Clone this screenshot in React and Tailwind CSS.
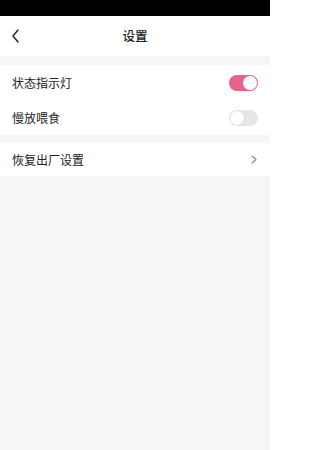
import React from "react";

function Toggle({ on }) {
  return (
    <div
      className={`relative w-[29px] h-[16px] rounded-full ${on ? "bg-[#e8628a]" : "bg-[#e6e6e6]"}`}
    >
      <div
        className={`absolute top-[1px] w-[14px] h-[14px] rounded-full bg-white ${on ? "right-[1px]" : "left-[1px] shadow-[0_0_0_0.5px_#d4d4d4]"}`}
      />
    </div>
  );
}

export default function App() {
  return (
    <div
      className="w-[270px] h-[450px] bg-[#f6f6f6] flex flex-col text-[#222]"
      style={{ fontFamily: '"Noto Sans CJK SC", "Noto Sans", sans-serif' }}
    >
      <div className="h-[16px] bg-black" />
      <div className="h-[40px] bg-white relative flex items-center justify-center">
        <svg
          className="absolute left-[11px] top-[13px]"
          width="9"
          height="14"
          viewBox="0 0 9 14"
          fill="none"
          stroke="#222"
          strokeWidth="1.4"
          strokeLinecap="round"
          strokeLinejoin="round"
        >
          <path d="M7 1 L2 7 L7 13" />
        </svg>
        <span className="text-[12.5px] font-medium text-[#222]">设置</span>
      </div>
      <div className="h-[9px]" />
      <div className="bg-white flex flex-col">
        <div className="h-[35px] flex items-center justify-between pl-[12px] pr-[12px]">
          <span className="text-[12px]">状态指示灯</span>
          <Toggle on />
        </div>
        <div className="h-[35px] flex items-center justify-between pl-[12px] pr-[12px]">
          <span className="text-[12px]">慢放喂食</span>
          <Toggle on={false} />
        </div>
      </div>
      <div className="h-[8px]" />
      <div className="bg-white h-[33px] flex items-center justify-between pl-[12px] pr-[12px]">
        <span className="text-[12px]">恢复出厂设置</span>
        <svg
          width="6"
          height="9"
          viewBox="0 0 6 9"
          fill="none"
          stroke="#888"
          strokeWidth="1.1"
          strokeLinecap="round"
          strokeLinejoin="round"
          className="mr-[1px]"
        >
          <path d="M1 1 L5 4.5 L1 8" />
        </svg>
      </div>
    </div>
  );
}
